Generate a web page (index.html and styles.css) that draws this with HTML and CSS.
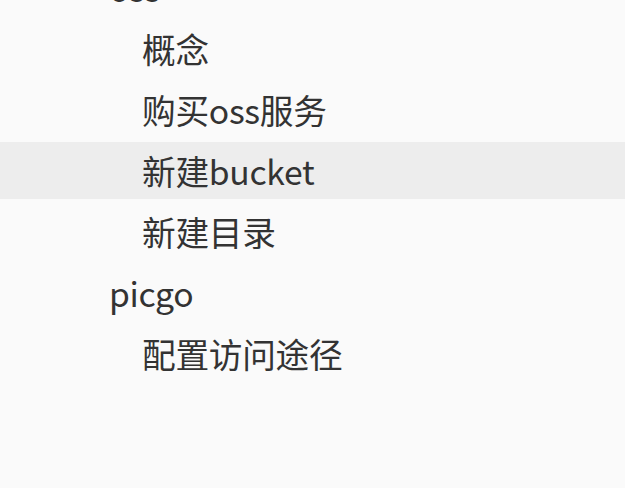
FILE: index.html
```html
<!DOCTYPE html>
<html lang="zh-CN">
<head>
<meta charset="utf-8">
<link rel="stylesheet" href="styles.css">
</head>
<body>
<nav class="outline">
  <ul class="tree">
    <li class="item lvl1 top"><span class="label">oss</span></li>
    <li class="item lvl2"><span class="label">概念</span></li>
    <li class="item lvl2"><span class="label">购买oss服务</span></li>
    <li class="item lvl2 active"><span class="label">新建bucket</span></li>
    <li class="item lvl2"><span class="label">新建目录</span></li>
    <li class="item lvl1"><span class="label">picgo</span></li>
    <li class="item lvl2"><span class="label">配置访问途径</span></li>
  </ul>
</nav>
</body>
</html>
```
FILE: styles.css
```css
html, body {
  margin: 0;
  padding: 0;
  background: #fafafa;
  height: 100%;
  overflow: hidden;
}
.outline {
  font-family: "Noto Sans CJK SC", "Noto Sans", sans-serif;
  font-size: 33.7px;
  color: #333333;
}
.tree {
  list-style: none;
  margin: 0;
  padding: 0;
  display: flex;
  flex-direction: column;
  gap: 4px;
}
.item {
  height: 57px;
  line-height: 57px;
  white-space: nowrap;
}
.label {
  letter-spacing: -0.3px;
}
.top {
  margin-top: -41px;
}
.lvl1 { padding-left: 109px; }
.lvl2 { padding-left: 142px; }
.active { background: #ededed; }
```
